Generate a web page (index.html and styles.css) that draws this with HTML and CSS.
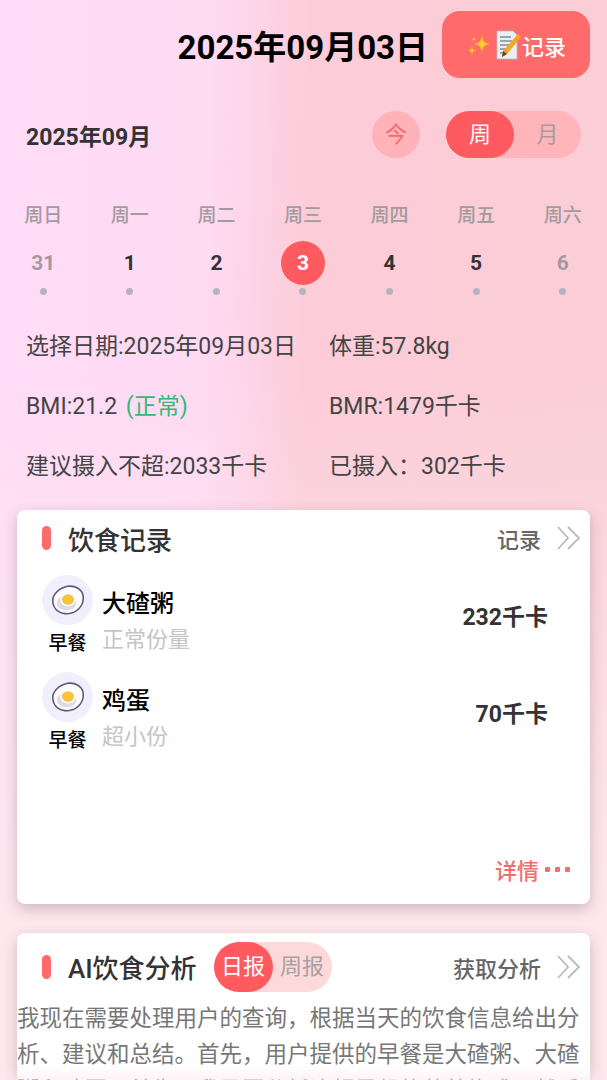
FILE: index.html
```html
<!DOCTYPE html>
<html lang="zh-CN">

<head>
    <meta charset="UTF-8">
    <meta name="viewport" content="width=device-width, initial-scale=1.0">
    <title>饮食记录</title>
    <link rel="stylesheet" href="styles.css">
</head>

<body>
    <svg width="0" height="0" class="defs">
        <symbol id="egg" viewBox="0 0 52 50">
            <path d="M11 27c-1-7 6-14 15-16 8-1 15 3 16 10 1 10-7 18-16 18-8 0-14-4-15-12z" fill="#fbfafd" stroke="#5f5a72" stroke-width="1.600"/>
            <ellipse cx="25" cy="28" rx="10" ry="7.500" fill="#dcdae6"/>
            <ellipse cx="26.500" cy="24.500" rx="8" ry="7" fill="#fff"/>
            <ellipse cx="26.500" cy="24.500" rx="6.200" ry="5.300" fill="#f7c23c"/>
        </symbol>
        <symbol id="chev" viewBox="0 0 24 24">
            <path d="M1 1l10 11L1 23M11 1l11 11-11 11" fill="none" stroke="#b9b9c2" stroke-width="1.800"/>
        </symbol>
    </svg>

    <div id="page">
        <div class="top">
            <h1>2025年09月03日</h1>
            <div class="rec-btn">
                <svg class="spark" viewBox="0 0 24 24">
                    <path d="M15 2c1 6 2 8 8 9-6 1-7 3-8 9-1-6-2-8-8-9 6-1 7-3 8-9z" fill="#fcc934" stroke="#ee9a1c" stroke-width=".6"/>
                    <path d="M5 13c.5 3 1 4 4 4.500-3 .5-3.500 1.500-4 4.500-.5-3-1-4-4-4.500 3-.5 3.500-1.500 4-4.500z" fill="#fcc934" stroke="#ee9a1c" stroke-width=".6"/>
                    <path d="M7 4c.3 1.500.6 2 2 2.300-1.400.3-1.700.8-2 2.200-.3-1.400-.6-1.900-2-2.200 1.400-.3 1.700-.8 2-2.300z" fill="#fcc934"/>
                </svg>
                <svg class="memo" viewBox="0 0 26 30">
                    <path d="M1 1h16l4 4v24H1z" fill="#eceff1" stroke="#b0bec5" stroke-width=".8"/>
                    <path d="M4 7h11M4 11h12M4 15h10M4 19h8M4 23h6" stroke="#78909c" stroke-width="1.300"/>
                    <path d="M22 4l3 3-14 17-5 3 1-6z" fill="#f5a623"/>
                    <path d="M7 21l4 3-5 3z" fill="#5d4037"/>
                </svg>
                <span>记录</span>
            </div>
        </div>

        <div class="month-bar">
            <div class="month">2025年09月</div>
            <div class="today">今</div>
            <div class="switch">
                <span class="on">周</span>
                <span>月</span>
            </div>
        </div>

        <ul class="week">
            <li>周日</li>
            <li>周一</li>
            <li>周二</li>
            <li>周三</li>
            <li>周四</li>
            <li>周五</li>
            <li>周六</li>
        </ul>
        <ul class="days">
            <li class="other"><b>31</b><i></i></li>
            <li><b>1</b><i></i></li>
            <li><b>2</b><i></i></li>
            <li class="selected"><b>3</b><i></i></li>
            <li><b>4</b><i></i></li>
            <li><b>5</b><i></i></li>
            <li class="other"><b>6</b><i></i></li>
        </ul>

        <div class="info">
            <div>选择日期:2025年09月03日</div>
            <div>体重:57.8kg</div>
            <div>BMI:21.2 <span class="ok">(正常)</span></div>
            <div>BMR:1479千卡</div>
            <div>建议摄入不超:2033千卡</div>
            <div>已摄入：302千卡</div>
        </div>

        <div class="card food">
            <div class="card-head">
                <span class="bar"></span>
                <h2>饮食记录</h2>
                <span class="more">记录</span>
                <svg class="chev"><use href="#chev"/></svg>
            </div>
            <div class="item">
                <div class="meal">
                    <div class="egg"><svg><use href="#egg"/></svg></div>
                    <span>早餐</span>
                </div>
                <div class="name">
                    <strong>大碴粥</strong>
                    <span>正常份量</span>
                </div>
                <div class="kcal">232千卡</div>
            </div>
            <div class="item">
                <div class="meal">
                    <div class="egg"><svg><use href="#egg"/></svg></div>
                    <span>早餐</span>
                </div>
                <div class="name">
                    <strong>鸡蛋</strong>
                    <span>超小份</span>
                </div>
                <div class="kcal">70千卡</div>
            </div>
            <div class="detail">详情<span class="dots"><i></i><i></i><i></i></span></div>
        </div>

        <div class="card ai">
            <div class="card-head">
                <span class="bar"></span>
                <h2>AI饮食分析</h2>
                <div class="report">
                    <span class="on">日报</span>
                    <span>周报</span>
                </div>
                <span class="more">获取分析</span>
                <svg class="chev"><use href="#chev"/></svg>
            </div>
            <p>我现在需要处理用户的查询，根据当天的饮食信息给出分析、建议和总结。首先，用户提供的早餐是大碴粥、大碴粥和鸡蛋。首先，我需要分析这顿早餐的营养构成，然后结合用户的身体数据给出建议。</p>
        </div>
    </div>

    <div class="fade"></div>
</body>

</html>
```

FILE: styles.css
```css
* {
    margin: 0;
    padding: 0;
    box-sizing: border-box;
}

ul {
    list-style: none;
}

html,
body {
    height: 1080px;
    overflow: hidden;
}

body {
    font-family: Roboto, "Noto Sans CJK SC", sans-serif;
    color: #333;
    background:
        linear-gradient(to bottom, rgba(253, 234, 238, 0) 35%, rgba(253, 232, 238, 1) 85%),
        linear-gradient(91deg, #ffdcf7 0%, #fedaf3 34%, #fcccd8 50%, #fbced6 100%);
}

.defs {
    position: absolute;
}

.top {
    display: flex;
    justify-content: flex-end;
    align-items: center;
    gap: 14px;
    padding: 11px 17px 0 0;
}

.top h1 {
    font-size: 33px;
    font-weight: 700;
    color: #000;
}

.rec-btn {
    width: 148px;
    height: 67px;
    background: #ff6b6b;
    border-radius: 18px;
    display: flex;
    align-items: center;
    padding-left: 25px;
    color: #fff;
    font-size: 22px;
    font-weight: 500;
}

.spark {
    width: 24px;
    height: 24px;
    margin-right: 5px;
}

.memo {
    width: 26px;
    height: 30px;
}

.month-bar {
    display: flex;
    align-items: center;
    margin-top: 33px;
    padding: 0 26px;
}

.month {
    font-size: 23px;
    font-weight: 700;
    margin-right: auto;
}

.today {
    width: 48px;
    height: 47px;
    border-radius: 50%;
    background: #ffb3b8;
    color: #f26a70;
    font-size: 22px;
    line-height: 47px;
    text-align: center;
    margin-right: 26px;
}

.switch {
    width: 135px;
    height: 47px;
    border-radius: 24px;
    background: #ffb5ba;
    display: flex;
    font-size: 22px;
    line-height: 47px;
    text-align: center;
    color: #a89a9c;
}

.switch span {
    width: 67px;
    border-radius: 24px;
}

.switch .on {
    width: 68px;
    background: #ff5a5f;
    color: #fff;
}

.week,
.days {
    display: grid;
    grid-template-columns: repeat(7, 1fr);
    padding-right: 1px;
    text-align: center;
}

.week {
    margin-top: 44px;
    font-size: 19px;
    font-weight: 500;
    line-height: 28px;
    color: #a39a9e;
}

.days {
    margin-top: 11px;
}

.days li {
    display: flex;
    flex-direction: column;
    align-items: center;
}

.days b {
    width: 44px;
    height: 44px;
    border-radius: 50%;
    font-size: 21px;
    line-height: 44px;
}

.days i {
    width: 7px;
    height: 7px;
    border-radius: 50%;
    background: #b4b4c0;
    margin-top: 3px;
}

.days .other b {
    color: #a39a9e;
}

.days .selected b {
    background: #ff5a5f;
    color: #fff;
}

.info {
    display: grid;
    grid-template-columns: 303px 1fr;
    grid-auto-rows: 60px;
    align-items: center;
    margin-top: 19px;
    padding-left: 26px;
    font-size: 23px;
    color: #444;
}

.ok {
    color: #35b877;
    margin-left: 3px;
}

.card {
    margin: 0 17px;
    background: #fff;
    border-radius: 8px;
    box-shadow: 0 5px 14px rgba(90, 60, 70, 0.28);
}

.food {
    height: 394px;
    margin-top: 16px;
    position: relative;
}

.ai {
    margin-top: 29px;
}

.card-head {
    display: flex;
    align-items: center;
    height: 56px;
    margin-bottom: 9px;
    padding: 0 9px 0 25px;
}

.ai .card-head {
    height: 67px;
    margin-bottom: 0;
}

.bar {
    width: 9px;
    height: 24px;
    border-radius: 5px;
    background: #ff6b6b;
    margin-right: 17px;
}

.card-head h2 {
    font-size: 26px;
    font-weight: 500;
    color: #333;
}

.more {
    margin-left: auto;
    font-size: 22px;
    font-weight: 500;
    color: #666;
}

.chev {
    width: 24px;
    height: 24px;
    margin-left: 16px;
}

.item {
    display: flex;
    align-items: center;
    height: 97px;
    padding: 0 42px 0 25px;
}

.meal {
    align-self: flex-start;
    width: 51px;
    display: flex;
    flex-direction: column;
    align-items: center;
    font-size: 19px;
    font-weight: 500;
    color: #000;
    line-height: 26px;
}

.egg {
    width: 51px;
    height: 50px;
    border-radius: 50%;
    background: #f1effb;
    margin-bottom: 6px;
}

.egg svg {
    width: 51px;
    height: 50px;
    display: block;
}

.name {
    display: flex;
    flex-direction: column;
    margin: 0 0 3px 9px;
}

.name strong {
    font-size: 24px;
    font-weight: 500;
    line-height: 36px;
    color: #000;
}

.name span {
    font-size: 22px;
    line-height: 36px;
    color: #c4c4ca;
}

.kcal {
    margin: 0 0 18px auto;
    font-size: 23px;
    font-weight: 700;
    color: #333;
}

.detail {
    position: absolute;
    right: 20px;
    bottom: 19px;
    display: flex;
    align-items: center;
    font-size: 22px;
    font-weight: 500;
    color: #f56c6c;
}

.dots {
    display: flex;
    gap: 5px;
    margin-left: 6px;
}

.dots i {
    width: 5px;
    height: 5px;
    border-radius: 1px;
    background: #f56c6c;
}

.report {
    display: flex;
    width: 118px;
    height: 50px;
    margin-left: 17px;
    border-radius: 25px;
    background: #fdd9da;
    font-size: 22px;
    line-height: 50px;
    text-align: center;
    color: #a9a0a0;
}

.report span {
    width: 59px;
    border-radius: 25px;
}

.report .on {
    background: #ff5a5f;
    color: #fff;
}

.ai p {
    font-size: 22.5px;
    line-height: 36px;
    color: #777;
    padding-right: 10px;
}

.fade {
    position: fixed;
    left: 0;
    right: 0;
    bottom: 0;
    height: 14px;
    background: linear-gradient(to bottom, rgba(253, 228, 236, 0), rgba(253, 232, 240, 0.55));
}
```
